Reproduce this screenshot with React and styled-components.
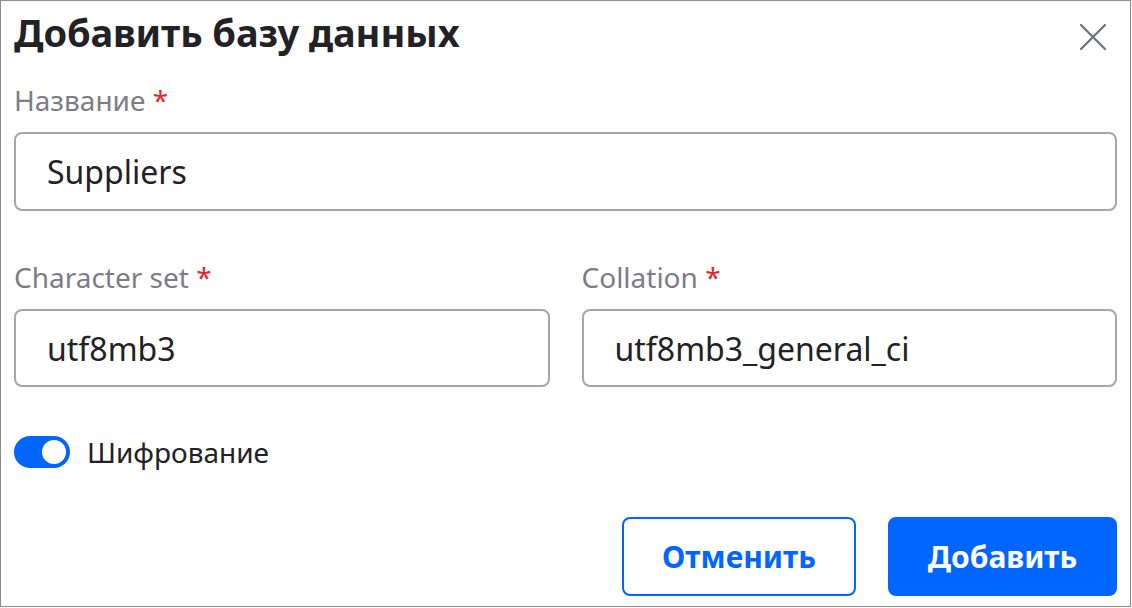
import React from "react";
import styled, { createGlobalStyle } from "styled-components";

const Global = createGlobalStyle`
  html, body { margin: 0; padding: 0; background: #fff; }
  body { font-family: "Noto Sans", "Open Sans", sans-serif; }
  * { box-sizing: border-box; }
`;

const Frame = styled.div`
  width: 1131px;
  height: 607px;
  border: 1px solid #8c8c8c;
  padding: 0 13px;
  display: flex;
  flex-direction: column;
  background: #fff;
`;

const Header = styled.div`
  display: flex;
  align-items: center;
  justify-content: space-between;
  height: 62px;
`;

const Title = styled.h1`
  margin: 0;
  font-size: 38px;
  font-weight: 700;
  color: #222226;
  line-height: 1;
  letter-spacing: -0.1px;
`;

const CloseButton = styled.button`
  border: none;
  background: none;
  padding: 0;
  width: 32px;
  height: 32px;
  display: flex;
  align-items: center;
  justify-content: center;
  margin-right: 8px;
  margin-top: 10px;
  color: #6e707a;
  cursor: pointer;
`;

const Field = styled.div`
  display: flex;
  flex-direction: column;
  margin-top: ${(p) => p.$top || 0}px;
`;

const Label = styled.label`
  font-size: 28px;
  color: #7d7d86;
  line-height: 36px;
  margin-bottom: 14px;
`;

const Star = styled.span`
  color: #e3262b;
`;

const Input = styled.div`
  height: ${(p) => p.$h || 79}px;
  border: 2px solid #a6a6ab;
  border-radius: 8px;
  display: flex;
  align-items: center;
  padding-left: 31px;
  font-size: 32px;
  color: #222226;
`;

const Row = styled.div`
  display: grid;
  grid-template-columns: 1fr 1fr;
  gap: 32px;
  margin-top: 48px;
`;

const ToggleRow = styled.div`
  display: flex;
  align-items: center;
  gap: 17px;
  margin-top: 49px;
`;

const Switch = styled.div`
  width: 56px;
  height: 32px;
  border-radius: 16px;
  background: #0066ff;
  position: relative;
  flex: none;
  &::after {
    content: "";
    position: absolute;
    right: 4px;
    top: 4px;
    width: 24px;
    height: 24px;
    border-radius: 50%;
    background: #fff;
  }
`;

const ToggleLabel = styled.span`
  font-size: 28px;
  line-height: 32px;
  color: #222226;
`;

const Footer = styled.div`
  display: flex;
  justify-content: flex-end;
  gap: 32px;
  margin-top: auto;
  margin-bottom: 10px;
`;

const Button = styled.button`
  height: 79px;
  width: ${(p) => p.$w}px;
  border-radius: 8px;
  border: 2px solid #0066ff;
  background: ${(p) => (p.$primary ? "#0066ff" : "#fff")};
  color: ${(p) => (p.$primary ? "#fff" : "#0066ff")};
  font-family: "Noto Sans", "Open Sans", sans-serif;
  font-size: 30px;
  font-weight: 700;
  cursor: pointer;
`;

export default function App() {
  return (
    <>
      <Global />
      <Frame>
        <Header>
          <Title>Добавить базу данных</Title>
          <CloseButton aria-label="close">
            <svg width="28" height="28" viewBox="0 0 28 28">
              <path d="M2 2 L26 26 M26 2 L2 26" stroke="currentColor" strokeWidth="2.2" strokeLinecap="round" />
            </svg>
          </CloseButton>
        </Header>
        <Field $top={19}>
          <Label>Название <Star>*</Star></Label>
          <Input>Suppliers</Input>
        </Field>
        <Row>
          <Field>
            <Label>Character set <Star>*</Star></Label>
            <Input $h={78}>utf8mb3</Input>
          </Field>
          <Field>
            <Label>Collation <Star>*</Star></Label>
            <Input $h={78}>utf8mb3_general_ci</Input>
          </Field>
        </Row>
        <ToggleRow>
          <Switch />
          <ToggleLabel>Шифрование</ToggleLabel>
        </ToggleRow>
        <Footer>
          <Button $w={234}>Отменить</Button>
          <Button $w={229} $primary>Добавить</Button>
        </Footer>
      </Frame>
    </>
  );
}
